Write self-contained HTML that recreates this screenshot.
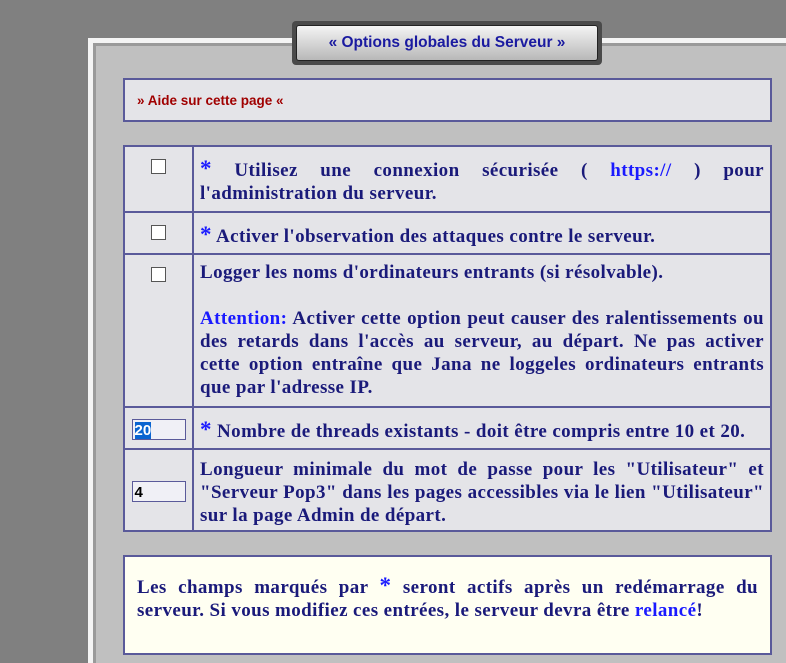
<!DOCTYPE html><html><head><style>
body{margin:0;width:786px;height:632px;background:#808080;position:relative;overflow:hidden;font-family:"Liberation Serif",serif}
.panel{position:absolute;left:88px;top:38px;width:720px;height:620px;background:#c0c0c0;border-top:5px solid #f4f4f4;border-left:5px solid #f4f4f4;box-shadow:inset 3px 3px 0 #9a9a9a}
.tab{position:absolute;left:292px;top:21px;width:310px;height:44px;background:#4a4a4a;border-radius:4px;box-sizing:border-box;padding:4px}
.tab div{height:100%;box-sizing:border-box;border:1px solid #222;border-radius:3px;background:linear-gradient(#f4f4f4,#b8b8b8);color:#1a1aa0;font:bold 15.5px "Liberation Sans",sans-serif;text-align:center;line-height:34px}
.help{position:absolute;left:123px;top:78px;height:44px;border:2px solid #5a5a9a;background:#e4e4e8;color:#a00000;font:bold 13.5px "Liberation Sans",sans-serif;line-height:42px;padding-left:12px;box-sizing:border-box;width:649px}
table{position:absolute;left:123px;top:145px;width:649px;border-collapse:collapse;background:#e4e4e8}
td{border:2px solid #5a5a9a;color:#1a1a7a;font-weight:bold;font-size:19px;letter-spacing:0.4px;line-height:23px;padding:6px 6px 2px;text-align:justify}
td.c{width:55px;text-align:center;vertical-align:top;padding-top:10px}
.j{display:block;text-align-last:justify;white-space:nowrap}
.cb{display:inline-block;width:13px;height:13px;border:1px solid #555;background:#fff}
.s{color:#1a1aff;font-size:23px}.b{color:#1a1aff}
.inp{display:inline-block;width:54px;height:21px;border:1px solid #5a5a9a;background:#f0f0f6;text-align:left;font:bold 15px "Liberation Sans",sans-serif;color:#000;line-height:21px;box-sizing:border-box;padding-left:2px;letter-spacing:0}
.note{position:absolute;left:123px;top:555px;width:649px;height:100px;border:2px solid #5a5a9a;background:#fffff2;box-sizing:border-box;padding:17px 12px;color:#1a1a7a;font-weight:bold;font-size:19px;letter-spacing:0.4px;line-height:23px;text-align:justify}
</style></head><body>
<div class="panel"></div>
<div class="tab"><div>« Options globales du Serveur »</div></div>
<div class="help">» Aide sur cette page «</div>
<table>
<tr style="height:66px"><td class="c"><span class="cb"></span></td><td><span class="j"><span class="s">*</span> Utilisez une connexion sécurisée ( <span class="b">https://</span> ) pour</span>l'administration du serveur.</td></tr>
<tr style="height:42px"><td class="c"><span class="cb"></span></td><td><span class="s">*</span> Activer l'observation des attaques contre le serveur.</td></tr>
<tr style="height:153px"><td class="c"><span class="cb"></span></td><td style="vertical-align:top">Logger les noms d'ordinateurs entrants (si résolvable).<br><br><span class="j"><span class="b">Attention:</span> Activer cette option peut causer des ralentissements ou</span><span class="j">des retards dans l'accès au serveur, au départ. Ne pas activer</span><span class="j">cette option entraîne que Jana ne loggeles ordinateurs entrants</span>que par l'adresse IP.</td></tr>
<tr style="height:42px"><td class="c" style="vertical-align:middle;padding-top:4px"><span class="inp"><span style="background:#0a64d0;color:#fff">20</span></span></td><td><span class="s">*</span> Nombre de threads existants - doit être compris entre 10 et 20.</td></tr>
<tr style="height:82px"><td class="c" style="vertical-align:middle;padding-top:4px"><span class="inp">4</span></td><td><span class="j">Longueur minimale du mot de passe pour les "Utilisateur" et</span><span class="j">"Serveur Pop3" dans les pages accessibles via le lien "Utilisateur"</span>sur la page Admin de départ.</td></tr>
</table>
<div class="note"><span class="j">Les champs marqués par <span class="s">*</span> seront actifs après un redémarrage du</span>serveur. Si vous modifiez ces entrées, le serveur devra être <span class="b">relancé</span>!</div>
</body></html>
